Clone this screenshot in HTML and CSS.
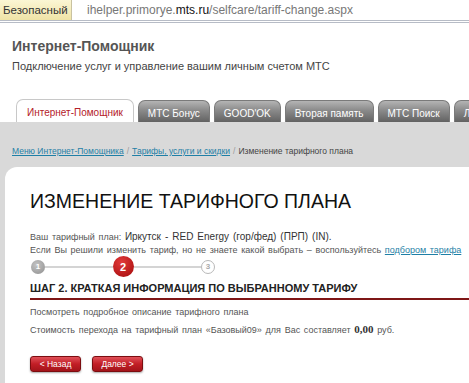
FILE: index.html
```html
<!DOCTYPE html>
<html>
<head>
    <meta charset="UTF-8">
    <title>Изменение тарифного плана</title>
    <link rel="stylesheet" href="styles.css">
</head>
<body>
    <div class="addr-bar">
        <span class="secure">Безопасный</span>
        <span class="url">ihelper.primorye.<b>mts.ru</b>/selfcare/tariff-change.aspx</span>
    </div>

    <div class="site-head">
        <h1>Интернет-Помощник</h1>
        <p>Подключение услуг и управление вашим личным счетом МТС</p>
    </div>

    <div class="tabs">
        <a class="tab active" href="#">Интернет-Помощник</a>
        <a class="tab" href="#">МТС Бонус</a>
        <a class="tab" href="#">GOOD'OK</a>
        <a class="tab" href="#">Вторая память</a>
        <a class="tab" href="#">МТС Поиск</a>
        <a class="tab" href="#">Личный кабинет</a>
    </div>

    <div class="band">
        <div class="crumbs">
            <a href="#">Меню Интернет-Помощника</a>
            <span class="sep">/</span>
            <a href="#">Тарифы, услуги и скидки</a>
            <span class="sep">/</span>
            <span>Изменение тарифного плана</span>
        </div>

        <div class="panel">
            <h2>ИЗМЕНЕНИЕ ТАРИФНОГО ПЛАНА</h2>

            <p class="info">Ваш тарифный план: <span class="plan">Иркутск - RED Energy (гор/фед) (ПРП) (IN).</span></p>
            <p class="info">Если Вы решили изменить тариф, но не знаете какой выбрать – воспользуйтесь <a href="#">подбором тарифа</a></p>

            <div class="steps">
                <span class="step done">1</span>
                <span class="line"></span>
                <span class="step current">2</span>
                <span class="line"></span>
                <span class="step next">3</span>
            </div>

            <h3>ШАГ 2. КРАТКАЯ ИНФОРМАЦИЯ ПО ВЫБРАННОМУ ТАРИФУ</h3>

            <p class="info">Посмотреть подробное описание тарифного плана</p>
            <p class="info">Стоимость перехода на тарифный план «Базовый09» для Вас составляет <b class="sum">0,00</b> руб.</p>

            <div class="buttons">
                <a class="btn" href="#">&lt; Назад</a>
                <a class="btn" href="#">Далее &gt;</a>
            </div>
        </div>
    </div>
</body>
</html>
```

FILE: styles.css
```css
:root {
    --red: #b5121b;
    --dark-red: #7e1616;
    --gray-band: #d9d9d9;
    --text: #555;
    --link: #1f7fa6;
}

html, body {
    height: 100%;
}

body {
    margin: 0;
    font-family: "Liberation Sans", Arial, sans-serif;
    color: var(--text);
    background: #fff;
    overflow: hidden;
    display: flex;
    flex-direction: column;
}

/* адресная строка */
.addr-bar {
    display: flex;
    align-items: stretch;
    height: 20px;
    border-bottom: 3px double #b7bcc6;
    font-size: 12px;
    white-space: nowrap;
}

.secure {
    display: flex;
    align-items: center;
    width: 68px;
    padding-left: 3px;
    font-size: 11.5px;
    color: #333;
    background: linear-gradient(#fbf6d4, #efe3a6);
    border-right: 1px solid #c9c2a0;
}

.url {
    display: flex;
    align-items: center;
    padding-left: 15px;
    color: #777;
}

.url b {
    font-weight: normal;
    color: #111;
}

/* шапка */
.site-head {
    padding: 15px 12px 0;
}

.site-head h1 {
    margin: 0;
    font-size: 14px;
    color: #555;
}

.site-head p {
    margin: 6px 0 0;
    font-size: 11px;
    color: #444;
}

/* вкладки */
.tabs {
    display: flex;
    align-items: flex-end;
    gap: 4px;
    padding: 27px 0 0 16px;
    white-space: nowrap;
    overflow: hidden;
}

.tab {
    flex: none;
    height: 21px;
    line-height: 25px;
    padding: 0 9px;
    font-size: 10px;
    color: #fff;
    text-decoration: none;
    border: 1px solid #7a7a7a;
    border-bottom: 0;
    border-radius: 7px 7px 0 0;
    background: linear-gradient(#b4b4b4, #8a8a8a 45%, #626262);
}

.tab.active {
    height: 22px;
    line-height: 26px;
    padding: 0 10px;
    color: #b4202a;
    background: #fff;
    border-color: #c8c8c8;
}

/* серая полоса */
.band {
    flex: 1;
    display: flex;
    flex-direction: column;
    background: var(--gray-band);
    padding-left: 5px;
}

.crumbs {
    display: flex;
    gap: 3px;
    padding: 24px 0 11px 7px;
    font-size: 8.5px;
    color: #444;
    white-space: nowrap;
}

.crumbs a {
    color: var(--link);
}

.crumbs .sep {
    color: #999;
}

.panel {
    flex: 1;
    background: #fff;
    border-radius: 12px 0 0 0;
    padding: 23px 0 0 25px;
}

.panel h2 {
    margin: 0 0 18px;
    font-size: 19.5px;
    line-height: 23px;
    font-weight: normal;
    color: #111;
}

.info {
    margin: 0 0 2px;
    font-size: 9px;
    line-height: 11px;
    color: var(--text);
    word-spacing: 1.2px;
    white-space: nowrap;
}

.info a {
    color: var(--link);
}

.plan {
    color: #333;
    font-size: 10px;
}

.sum {
    font-family: "Liberation Serif", serif;
    font-size: 11px;
    color: #333;
}

/* шаги */
.steps {
    display: flex;
    align-items: center;
    width: 184px;
    margin: -2px 0 5px 1px;
}

.step {
    flex: none;
    display: flex;
    align-items: center;
    justify-content: center;
    box-sizing: border-box;
    width: 14px;
    height: 14px;
    border-radius: 50%;
    font-size: 8px;
    font-weight: bold;
}

.step.done {
    color: #fff;
    background: radial-gradient(circle at 40% 35%, #c4c4c4, #8e8e8e);
}

.step.current {
    width: 21px;
    height: 21px;
    font-size: 11px;
    color: #fff;
    background: radial-gradient(circle at 40% 30%, #e23a3a, #a30a0a);
}

.step.next {
    color: #aaa;
    background: #fff;
    border: 1px solid #b8b8b8;
}

.line {
    flex: 1;
    height: 2px;
    background: #d4d4d4;
}

.panel h3 {
    margin: 0 0 7px;
    padding-bottom: 3px;
    font-size: 11px;
    line-height: 13px;
    color: #222;
    border-bottom: 2px solid var(--dark-red);
}

.panel h3 + .info {
    margin-bottom: 6px;
}

/* кнопки */
.buttons {
    display: flex;
    gap: 11px;
    margin-top: 20px;
}

.btn {
    box-sizing: border-box;
    width: 51px;
    height: 16px;
    line-height: 14px;
    text-align: center;
    font-size: 8.5px;
    color: #fff;
    text-decoration: none;
    border: 1px solid #7c0d10;
    border-radius: 3px;
    background: linear-gradient(#e05058, #c21e26 50%, #a3141a);
    box-shadow: 0 1px 2px rgba(0, 0, 0, 0.35);
}
```
